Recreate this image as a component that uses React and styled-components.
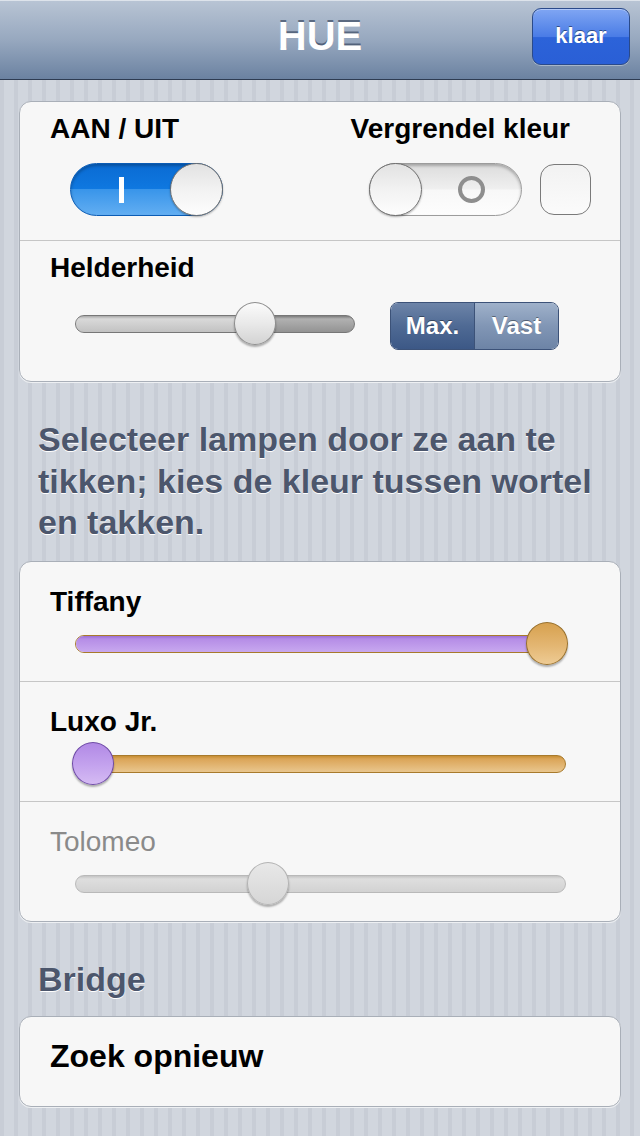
import React from 'react'
import styled, { createGlobalStyle, css } from 'styled-components'

const GlobalStyle = createGlobalStyle`
    html, body {
        margin: 0;
        padding: 0;
    }
    body {
        font-family: "Liberation Sans", Arial, sans-serif;
        background-color: #cdd2db;
        background-image: repeating-linear-gradient(
            90deg,
            #c8cdd6 0px,
            #c8cdd6 4px,
            #d1d6de 4px,
            #d1d6de 14px
        );
    }
`

const tones = {
    purple: css`
        background: linear-gradient(#9a6fd6 0px, #b58de6 3px, #c8a8ef 100%);
        border-color: #7c53ba;
    `,
    orange: css`
        background: linear-gradient(#c68e34 0px, #dba558 3px, #e9c68e 100%);
        border-color: #a87a2c;
    `,
    light: css`
        background: linear-gradient(#a9a9a9 0px, #d9d9d9 3px, #c2c2c2 100%);
        border-color: #8b8b8b;
    `,
    dark: css`
        background: linear-gradient(#7d7d7d 0px, #b1b1b1 3px, #939393 100%);
        border-color: #777;
    `,
    disabled: css`
        background: linear-gradient(#c4c4c4 0px, #dedede 3px, #d2d2d2 100%);
        border-color: #b9b9b9;
    `,
}

const knobs = {
    white: css`
        background: linear-gradient(#fbfbfb, #e9e9e9 50%, #d3d3d3);
        border-color: #8d8d8d;
    `,
    purple: css`
        background: linear-gradient(#b189e5, #c4a3ee 55%, #d5bbf3);
        border-color: #6e4aa6;
    `,
    orange: css`
        background: linear-gradient(#d7a14f, #e3b672 55%, #eecb94);
        border-color: #98702c;
    `,
    disabled: css`
        background: linear-gradient(#e8e8e8, #d6d6d6);
        border-color: #b3b3b3;
    `,
}

const Page = styled.div`
    min-height: 100vh;
`

const NavBar = styled.header`
    display: grid;
    grid-template-columns: 1fr auto 1fr;
    align-items: center;
    height: 80px;
    padding: 0 10px;
    background: linear-gradient(#b8c4d4, #97a8bf 50%, #6b82a1);
    border-top: 1px solid #dde3eb;
    border-bottom: 1px solid #2e3c52;
    box-sizing: border-box;
`

const Title = styled.h1`
    grid-column: 2;
    margin: -8px 0 0;
    font-size: 40px;
    font-weight: bold;
    color: #fff;
    text-shadow: 0 -2px 0 rgba(40, 55, 80, 0.6);
`

const DoneButton = styled.button`
    justify-self: end;
    width: 98px;
    height: 57px;
    margin-top: -8px;
    border: 1px solid #2a4a8a;
    border-radius: 9px;
    background: linear-gradient(#80a6f3, #4a7ce6 50%, #2c63d9 52%, #2a5fd6);
    box-shadow: 0 1px 0 rgba(255, 255, 255, 0.35), inset 0 1px 0 rgba(255, 255, 255, 0.4);
    font-family: inherit;
    font-size: 22px;
    font-weight: bold;
    color: #fff;
    text-shadow: 0 -1px 0 rgba(0, 0, 0, 0.45);
`

const Content = styled.main`
    padding: 21px 19px 28px;
`

const Card = styled.section`
    background: #f7f7f7;
    border: 1px solid #a9afb8;
    border-radius: 12px;
    box-shadow: 0 1px 0 #eef0f3;
    overflow: hidden;
`

const Row = styled.div`
    padding: ${(p) => p.$pad || '24px 30px 15px'};
    & + & {
        border-top: 1px solid #c6c6c6;
    }
`

const SplitRow = styled(Row)`
    display: flex;
    justify-content: space-between;
`

const Group = styled.div`
    display: flex;
    flex-direction: column;
    align-items: ${(p) => (p.$right ? 'flex-end' : 'flex-start')};
`

const Label = styled.div`
    font-size: 28px;
    line-height: 32px;
    font-weight: ${(p) => (p.$dim ? 'normal' : 'bold')};
    color: ${(p) => (p.$dim ? '#8a8a8a' : '#000')};
    margin-right: ${(p) => p.$inset || 0}px;
`

const Controls = styled.div`
    display: flex;
    align-items: center;
    gap: 18px;
    margin-top: 18px;
    margin-left: ${(p) => p.$indent || 0}px;
`

const Switch = styled.div`
    position: relative;
    display: flex;
    align-items: center;
    width: 153px;
    height: 53px;
    border-radius: 27px;
    box-sizing: border-box;
    border: 1px solid ${(p) => (p.$on ? '#0b5cb5' : '#9c9c9c')};
    background: ${(p) =>
        p.$on
            ? 'linear-gradient(#0a6bd3 0%, #0f78e0 48%, #3995ea 50%, #62aef2 100%)'
            : 'linear-gradient(#dcdcdc 0%, #efefef 48%, #f8f8f8 52%, #fdfdfd 100%)'};
    box-shadow: inset 0 2px 3px rgba(0, 0, 0, 0.25);
    flex-direction: ${(p) => (p.$on ? 'row' : 'row-reverse')};
`

const SwitchMark = styled.div`
    flex: 1;
    display: flex;
    justify-content: center;
    align-items: center;
`

const OnBar = styled.span`
    width: 5px;
    height: 26px;
    background: #fff;
`

const OffRing = styled.span`
    width: 19px;
    height: 19px;
    border-radius: 50%;
    border: 4px solid #8e8e8e;
`

const Knob = styled.span`
    width: 53px;
    height: 53px;
    margin: -1px;
    border-radius: 50%;
    box-sizing: border-box;
    border: 1px solid #6f6f6f;
    background: linear-gradient(#e2e2e2, #f2f2f2 50%, #fdfdfd);
    box-shadow: 0 1px 2px rgba(0, 0, 0, 0.3);
`

const Check = styled.span`
    width: 51px;
    height: 51px;
    box-sizing: border-box;
    border: 1.5px solid #7a7a7a;
    border-radius: 14px;
    background: linear-gradient(#f2f2f2, #fbfbfb);
`

const SliderLine = styled.div`
    display: flex;
    align-items: center;
    gap: 33px;
    margin-top: ${(p) => p.$top || 4}px;
`

const SliderWrap = styled.div`
    position: relative;
    height: 44px;
    margin-left: 22px;
    ${(p) => (p.$width ? `width: ${p.$width}px;` : 'flex: 1; margin-right: 22px;')}
`

const Track = styled.div`
    display: flex;
    height: 18px;
    margin: 13px 2px 0 3px;
    border-radius: 9px;
    overflow: hidden;
    box-sizing: border-box;
    border: 1px solid #888;
    ${(p) => tones[p.$tone]}
`

const TrackPart = styled.div`
    height: 100%;
    ${(p) => tones[p.$tone]}
`

const Thumb = styled.span`
    position: absolute;
    top: 0;
    width: 42px;
    height: 43px;
    border-radius: 50%;
    box-sizing: border-box;
    border: 1px solid;
    box-shadow: 0 2px 2px rgba(0, 0, 0, 0.3);
    ${(p) => knobs[p.$tone]}
`

const Segmented = styled.div`
    display: flex;
    width: 169px;
    height: 48px;
    margin-top: 4px;
    border: 1px solid #3c5278;
    border-radius: 8px;
    overflow: hidden;
    box-sizing: border-box;
`

const Segment = styled.div`
    flex: 1;
    display: flex;
    align-items: center;
    justify-content: center;
    font-size: 24px;
    font-weight: bold;
    color: #fff;
    text-shadow: 0 -1px 0 rgba(0, 0, 0, 0.4);
    background: ${(p) =>
        p.$active
            ? 'linear-gradient(#6d84a8, #4f6a94 50%, #3c5886)'
            : 'linear-gradient(#9fb1ca, #8196b5 50%, #6d84a6)'};
    & + & {
        border-left: 1px solid #3c5278;
    }
`

const Hint = styled.p`
    margin: 37px 19px 17px;
    font-size: 34px;
    line-height: 41.5px;
    font-weight: bold;
    color: #4c566c;
    text-shadow: 0 1px 0 #fff;
`

const Heading = styled.h2`
    margin: 37px 19px 17px;
    font-size: 34px;
    line-height: 40px;
    font-weight: bold;
    color: #4c566c;
    text-shadow: 0 1px 0 #fff;
`

const ActionRow = styled.div`
    padding: 21px 30px 32px;
    font-size: 32px;
    line-height: 36px;
    font-weight: bold;
    color: #000;
`

const Slider = ({ value, width, fill, rest, thumb, top }) => {
    const span = (width || 496) - 42
    return (
        <SliderLine $top={top}>
            <SliderWrap $width={width}>
                <Track $tone={rest}>
                    {fill && <TrackPart $tone={fill} style={{ width: `${value * 100}%` }} />}
                </Track>
                <Thumb $tone={thumb} style={{ left: value * span }} />
            </SliderWrap>
        </SliderLine>
    )
}

const lamps = [
    { name: 'Tiffany', value: 1, fill: 'purple', rest: 'orange', thumb: 'orange' },
    { name: 'Luxo Jr.', value: 0, fill: 'purple', rest: 'orange', thumb: 'purple' },
    { name: 'Tolomeo', value: 0.385, rest: 'disabled', thumb: 'disabled', dim: true },
]

const App = () => {
    return (
        <Page>
            <GlobalStyle />
            <NavBar>
                <Title>HUE</Title>
                <DoneButton type="button">klaar</DoneButton>
            </NavBar>
            <Content>
                <Card>
                    <SplitRow $pad="11px 29px 24px 30px">
                        <Group>
                            <Label>AAN / UIT</Label>
                            <Controls $indent={20}>
                                <Switch $on>
                                    <SwitchMark>
                                        <OnBar />
                                    </SwitchMark>
                                    <Knob />
                                </Switch>
                            </Controls>
                        </Group>
                        <Group $right>
                            <Label $inset={21}>Vergrendel kleur</Label>
                            <Controls>
                                <Switch>
                                    <SwitchMark>
                                        <OffRing />
                                    </SwitchMark>
                                    <Knob />
                                </Switch>
                                <Check />
                            </Controls>
                        </Group>
                    </SplitRow>
                    <Row $pad="11px 30px 31px">
                        <Label>Helderheid</Label>
                        <SliderLine $top={14}>
                            <SliderWrap $width={285}>
                                <Track $tone="dark">
                                    <TrackPart $tone="light" style={{ width: '60%' }} />
                                </Track>
                                <Thumb $tone="white" style={{ left: 162 }} />
                            </SliderWrap>
                            <Segmented>
                                <Segment $active>Max.</Segment>
                                <Segment>Vast</Segment>
                            </Segmented>
                        </SliderLine>
                    </Row>
                </Card>

                <Hint>Selecteer lampen door ze aan te tikken; kies de kleur tussen wortel en takken.</Hint>

                <Card>
                    {lamps.map((lamp) => (
                        <Row key={lamp.name}>
                            <Label $dim={lamp.dim}>{lamp.name}</Label>
                            <Slider
                                value={lamp.value}
                                fill={lamp.fill}
                                rest={lamp.rest}
                                thumb={lamp.thumb}
                            />
                        </Row>
                    ))}
                </Card>

                <Heading>Bridge</Heading>

                <Card>
                    <ActionRow>Zoek opnieuw</ActionRow>
                </Card>
            </Content>
        </Page>
    )
}

export default App
